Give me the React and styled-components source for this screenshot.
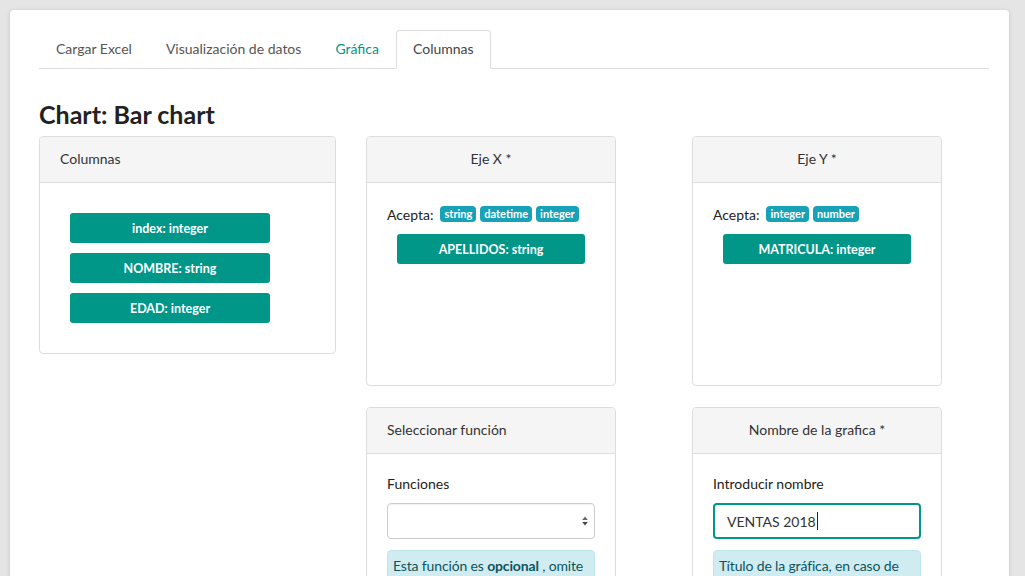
import React from "react";
import styled, { createGlobalStyle } from "styled-components";

const GlobalStyle = createGlobalStyle`
  * { box-sizing: border-box; }
  html, body { margin: 0; padding: 0; background: #e5e5e5; overflow: hidden; }
  body {
    font-family: Lato, "Noto Sans", "Liberation Sans", sans-serif;
    font-size: 14px;
    color: #333;
  }
`;

const Page = styled.div`
  height: 100vh;
  padding: 10px 0 0 10px;
  overflow: hidden;
`;

const Card = styled.div`
  width: 999px;
  min-height: 640px;
  background: #fff;
  border-radius: 4px;
  box-shadow: 0 1px 4px rgba(0, 0, 0, 0.16);
  padding: 20px 20px 0 29px;
`;

const Tabs = styled.ul`
  display: flex;
  list-style: none;
  margin: 0;
  padding: 0;
  border-bottom: 1px solid #ddd;
`;

const Tab = styled.li`
  margin-bottom: -1px;
  padding: 8px 16px 9px;
  line-height: 20px;
  border: 1px solid transparent;
  border-radius: 4px 4px 0 0;
  color: ${(p) => (p.$accent ? "#009688" : "#555")};
  ${(p) =>
    p.$active &&
    `
    color: #444;
    background: #fff;
    border-color: #ddd #ddd transparent;
  `}
`;

const Title = styled.h2`
  margin: 30px 0 7px;
  font-size: 25px;
  line-height: 30px;
  font-weight: 700;
  color: #222;
`;

const Grid = styled.div`
  display: grid;
  grid-template-columns: 327px 326px 250px;
  row-gap: 21px;
  align-items: start;
`;

const Panel = styled.section`
  width: ${(p) => p.$width}px;
  height: ${(p) => (p.$height ? `${p.$height}px` : "auto")};
  border: 1px solid #ddd;
  border-radius: 4px;
  background: #fff;
  overflow: hidden;
  grid-column: ${(p) => p.$col};
`;

const PanelHeader = styled.header`
  background: #f5f5f5;
  border-bottom: 1px solid #ddd;
  padding: 12px 20px 13px;
  line-height: 20px;
  color: #333;
  text-align: ${(p) => (p.$center ? "center" : "left")};
`;

const ColumnsBody = styled.div`
  padding: 30px;
  display: flex;
  flex-direction: column;
  gap: 10px;
`;

const FieldButton = styled.div`
  width: ${(p) => (p.$width ? `${p.$width}px` : "auto")};
  margin: ${(p) => (p.$inset ? "0 10px" : "0")};
  height: 30px;
  display: flex;
  align-items: center;
  justify-content: center;
  background: #009688;
  color: #fff;
  font-weight: 700;
  font-size: 12.5px;
  border-radius: 3px;
`;

const AxisBody = styled.div`
  padding: 21px 20px 19px;
`;

const AcceptRow = styled.div`
  display: flex;
  align-items: center;
  height: 20px;
  gap: 4px;
  margin-bottom: 10px;
`;

const AcceptLabel = styled.span`
  margin-right: 3px;
  color: #222;
`;

const Badge = styled.span`
  height: 16px;
  line-height: 16px;
  padding: 0 4px;
  font-size: 11px;
  font-weight: 700;
  color: #fff;
  background: #17a2b8;
  border-radius: 4px;
`;

const FormBody = styled.div`
  padding: 20px;
`;

const Label = styled.div`
  line-height: 20px;
  margin-bottom: 9px;
  color: #222;
`;

const SelectBox = styled.div`
  height: 36px;
  border: 1px solid #ccc;
  border-radius: 4px;
  box-shadow: inset 0 1px 1px rgba(0, 0, 0, 0.06);
  display: flex;
  align-items: center;
  justify-content: flex-end;
  padding-right: 6px;
  margin-bottom: 11px;
`;

const TextBox = styled.div`
  height: 36px;
  border: 2px solid #009688;
  border-radius: 4px;
  display: flex;
  align-items: center;
  padding: 0 12px;
  color: #333;
  margin-bottom: 11px;
`;

const Caret = styled.span`
  display: inline-block;
  width: 1px;
  height: 18px;
  background: #222;
  margin-left: 1px;
`;

const Alert = styled.div`
  padding: 5px 3px 5px 5px;
  line-height: 20px;
  letter-spacing: -0.15px;
  background: #d1ecf1;
  border: 1px solid #bee5eb;
  border-radius: 4px;
  color: #0c5460;
`;

const Arrows = () => (
  <svg width="6" height="10" viewBox="0 0 6 10">
    <path d="M3 0.5 L5.8 4 H0.2 Z" fill="#666" />
    <path d="M3 9.5 L5.8 6 H0.2 Z" fill="#444" />
  </svg>
);

export default function App() {
  return (
    <>
      <GlobalStyle />
      <Page>
        <Card>
          <Tabs>
            <Tab>Cargar Excel</Tab>
            <Tab>Visualización de datos</Tab>
            <Tab $accent>Gráfica</Tab>
            <Tab $active>Columnas</Tab>
          </Tabs>
          <Title>Chart: Bar chart</Title>
          <Grid>
            <Panel $width={297} $col={1}>
              <PanelHeader>Columnas</PanelHeader>
              <ColumnsBody>
                <FieldButton $width={200}>index: integer</FieldButton>
                <FieldButton $width={200}>NOMBRE: string</FieldButton>
                <FieldButton $width={200}>EDAD: integer</FieldButton>
              </ColumnsBody>
            </Panel>
            <Panel $width={250} $height={250} $col={2}>
              <PanelHeader $center>Eje X *</PanelHeader>
              <AxisBody>
                <AcceptRow>
                  <AcceptLabel>Acepta:</AcceptLabel>
                  <Badge>string</Badge>
                  <Badge>datetime</Badge>
                  <Badge>integer</Badge>
                </AcceptRow>
                <FieldButton $inset>APELLIDOS: string</FieldButton>
              </AxisBody>
            </Panel>
            <Panel $width={250} $height={250} $col={3}>
              <PanelHeader $center>Eje Y *</PanelHeader>
              <AxisBody>
                <AcceptRow>
                  <AcceptLabel>Acepta:</AcceptLabel>
                  <Badge>integer</Badge>
                  <Badge>number</Badge>
                </AcceptRow>
                <FieldButton $inset>MATRICULA: integer</FieldButton>
              </AxisBody>
            </Panel>
            <Panel $width={250} $height={250} $col={2}>
              <PanelHeader>Seleccionar función</PanelHeader>
              <FormBody>
                <Label>Funciones</Label>
                <SelectBox>
                  <Arrows />
                </SelectBox>
                <Alert>
                  Esta función es <b>opcional</b> , omite este paso si no desea
                  agrupar los datos.
                </Alert>
              </FormBody>
            </Panel>
            <Panel $width={250} $height={250} $col={3}>
              <PanelHeader $center>Nombre de la grafica *</PanelHeader>
              <FormBody>
                <Label>Introducir nombre</Label>
                <TextBox>
                  VENTAS 2018
                  <Caret />
                </TextBox>
                <Alert>
                  Título de la gráfica, en caso de no introducir uno se usará
                  el nombre por defecto.
                </Alert>
              </FormBody>
            </Panel>
          </Grid>
        </Card>
      </Page>
    </>
  );
}
